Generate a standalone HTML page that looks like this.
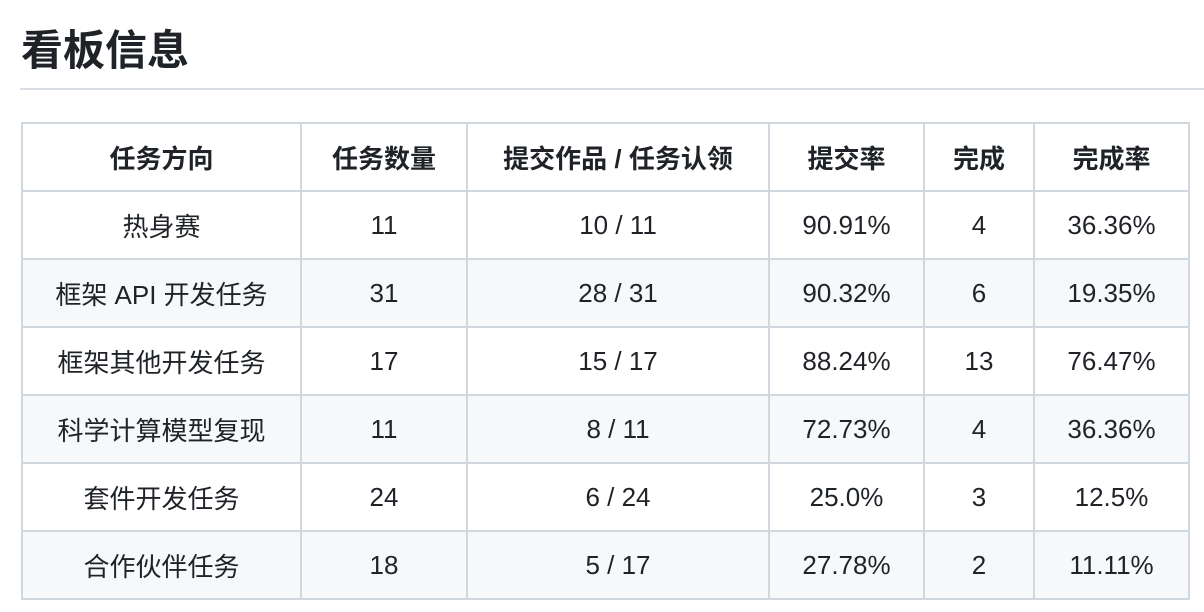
<!DOCTYPE html>
<html><head><meta charset="utf-8"><style>
body{margin:0;background:#fff;font-family:"Liberation Sans","Noto Sans CJK SC",sans-serif;color:#1f2328;}
h2{position:absolute;left:21px;top:23px;margin:0;font-size:42px;line-height:56px;font-weight:bold;}
.hr{position:absolute;left:20px;right:0;top:88px;height:2px;background:#d8dee4;}
table{position:absolute;left:21px;top:122px;border-collapse:collapse;font-size:26px;}
td,th{border:2px solid #d0d7de;height:66px;padding:0;text-align:center;}
th{font-weight:bold;}
tbody tr:nth-child(even){background:#f6f8fa;}
</style></head><body>
<h2>看板信息</h2>
<div class="hr"></div>
<table>
<colgroup><col style="width:279px"><col style="width:166px"><col style="width:302px"><col style="width:155px"><col style="width:110px"><col style="width:155px"></colgroup>
<thead><tr><th>任务方向</th><th>任务数量</th><th>提交作品 / 任务认领</th><th>提交率</th><th>完成</th><th>完成率</th></tr></thead>
<tbody>
<tr><td>热身赛</td><td>11</td><td>10 / 11</td><td>90.91%</td><td>4</td><td>36.36%</td></tr>
<tr><td>框架 API 开发任务</td><td>31</td><td>28 / 31</td><td>90.32%</td><td>6</td><td>19.35%</td></tr>
<tr><td>框架其他开发任务</td><td>17</td><td>15 / 17</td><td>88.24%</td><td>13</td><td>76.47%</td></tr>
<tr><td>科学计算模型复现</td><td>11</td><td>8 / 11</td><td>72.73%</td><td>4</td><td>36.36%</td></tr>
<tr><td>套件开发任务</td><td>24</td><td>6 / 24</td><td>25.0%</td><td>3</td><td>12.5%</td></tr>
<tr><td>合作伙伴任务</td><td>18</td><td>5 / 17</td><td>27.78%</td><td>2</td><td>11.11%</td></tr>
</tbody></table>
</body></html>
